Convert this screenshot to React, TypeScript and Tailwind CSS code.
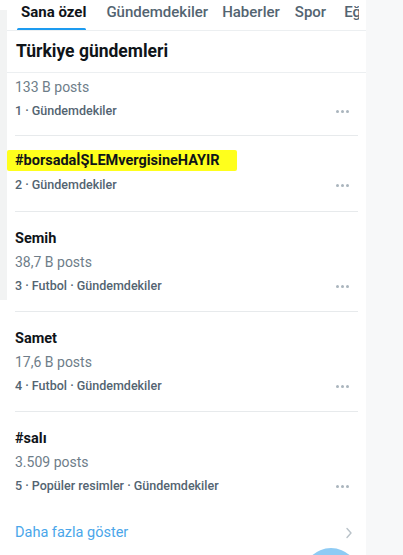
import React from "react";

const Dots = () => (
  <div className="flex items-center gap-[2px] mr-[9px]">
    <span className="w-[3px] h-[3px] rounded-full bg-[#aab5bd]" />
    <span className="w-[3px] h-[3px] rounded-full bg-[#aab5bd]" />
    <span className="w-[3px] h-[3px] rounded-full bg-[#aab5bd]" />
  </div>
);

const Meta = ({ text }: { text: string }) => (
  <div className="h-[22px] flex items-center justify-between">
    <span className="text-[12.5px] font-medium text-[#536471]">{text}</span>
    <Dots />
  </div>
);

const Posts = ({ text }: { text: string }) => (
  <div className="h-[25px] flex items-center text-[14px] text-[#6e7d89]">{text}</div>
);

const Title = ({ text }: { text: string }) => (
  <div className="h-[22px] flex items-center text-[14.5px] font-bold text-[#0f1419]">{text}</div>
);

export default function App() {
  return (
    <div
      className="w-[403px] h-[555px] overflow-hidden flex bg-white relative"
      style={{ fontFamily: "Roboto, 'Noto Sans', sans-serif" }}
    >
      <div className="w-[7px] flex flex-col">
        <div className="h-[10px] bg-white" />
        <div className="h-[290px] bg-[#f2f3f3]" />
        <div className="flex-1 bg-white" />
      </div>
      <div className="w-[359px] flex flex-col bg-white overflow-hidden">
        <div className="h-[32px] w-[359px] border-b border-[#eceff1] flex items-start overflow-hidden whitespace-nowrap">
          <div className="relative pl-[14px] pr-[6px] h-[31px] shrink-0">
            <div className="h-[25px] flex items-center text-[15px] font-bold text-[#0f1419]">Sana özel</div>
            <div className="absolute left-[10px] w-[69px] top-[28px] h-[3px] rounded-full bg-[#1d9bf0]" />
          </div>
          <div className="h-[25px] shrink-0 flex items-center pl-[14px] text-[15px] font-medium text-[#536471]">Gündemdekiler</div>
          <div className="h-[25px] shrink-0 flex items-center pl-[14px] text-[15px] font-medium text-[#536471]">Haberler</div>
          <div className="h-[25px] shrink-0 flex items-center pl-[15px] text-[15px] font-medium text-[#536471]">Spor</div>
          <div className="h-[25px] w-[15px] shrink-0 overflow-hidden flex items-center ml-[18px] text-[15px] font-medium text-[#536471]">Eğ</div>
        </div>
        <div className="h-[43px] border-b border-[#eceff1] flex items-center pl-[9px] text-[17.5px] font-bold text-[#0f1419]">
          Türkiye gündemleri
        </div>
        <div className="px-2">
          <div className="pt-[2px] pb-[13px] border-b border-[#e7eaec]">
            <Posts text="133 B posts" />
            <Meta text="1 · Gündemdekiler" />
          </div>
          <div className="pt-[14px] pb-[15px] border-b border-[#e7eaec]">
            <div className="-ml-2 pl-2 w-[230px] h-[21px] flex items-center bg-[#ffff1c] rounded-[2px] text-[14.5px] font-bold text-[#0f1419]">
              #borsadaİŞLEMvergisineHAYIR
            </div>
            <div className="mt-[3px]">
              <Meta text="2 · Gündemdekiler" />
            </div>
          </div>
          <div className="pt-[16px] pb-[14px] border-b border-[#e7eaec]">
            <Title text="Semih" />
            <Posts text="38,7 B posts" />
            <Meta text="3 · Futbol · Gündemdekiler" />
          </div>
          <div className="pt-[16px] pb-[14px] border-b border-[#e7eaec]">
            <Title text="Samet" />
            <Posts text="17,6 B posts" />
            <Meta text="4 · Futbol · Gündemdekiler" />
          </div>
          <div className="pt-[16px] pb-[14px]">
            <Title text="#salı" />
            <Posts text="3.509 posts" />
            <Meta text="5 · Popüler resimler · Gündemdekiler" />
          </div>
          <div className="h-[44px] flex items-center justify-between">
            <span className="text-[14.5px] text-[#4aa6ea]">Daha fazla göster</span>
            <svg width="8" height="12" viewBox="0 0 8 12" className="mr-[5px]">
              <path d="M2 1.5 L6 6 L2 10.5" fill="none" stroke="#b9c2c9" strokeWidth="1.4" strokeLinecap="round" strokeLinejoin="round" />
            </svg>
          </div>
        </div>
      </div>
      <div className="flex-1 bg-[#f7f8f9]" />
      <div className="absolute left-[303px] top-[548px] w-[56px] h-[56px] rounded-full bg-[#8ecbf4]" />
    </div>
  );
}
